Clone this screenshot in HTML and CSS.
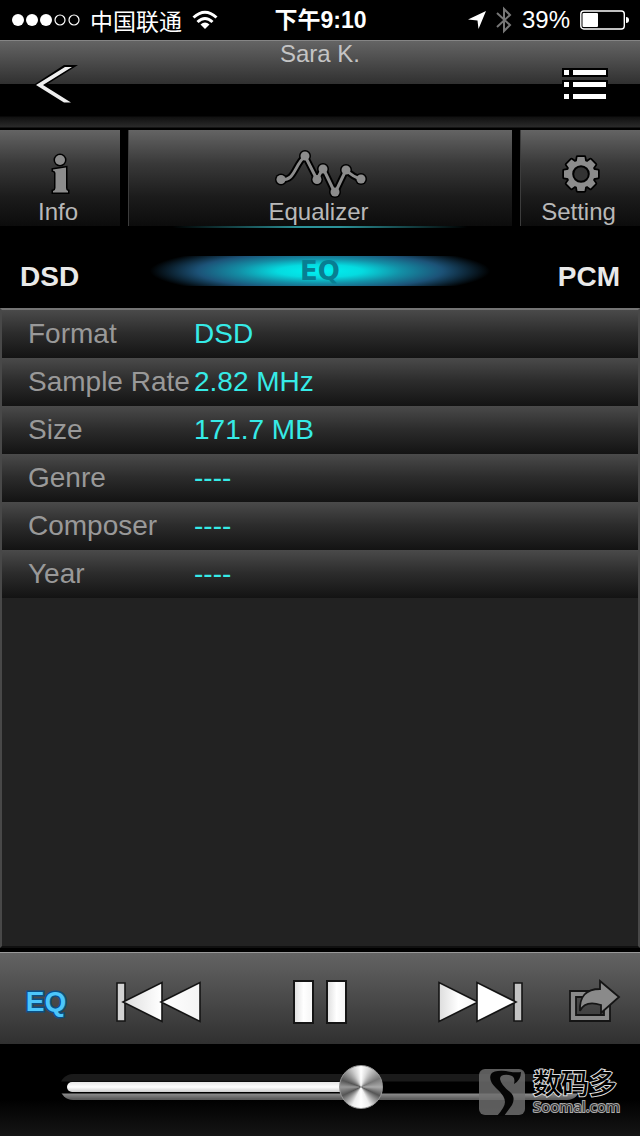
FILE: index.html
```html
<!DOCTYPE html>
<html lang="zh-CN">
<head>
<meta charset="utf-8">
<meta name="viewport" content="width=device-width, initial-scale=1">
<title>Sara K.</title>
<link rel="stylesheet" href="styles.css">
</head>
<body>
<div class="status">
  <div class="status-left">
    <svg width="68" height="14" viewBox="0 0 68 14" fill="#fff" aria-hidden="true">
      <circle cx="6" cy="7" r="6"/><circle cx="20" cy="7" r="6"/><circle cx="34" cy="7" r="6"/>
      <g fill="none" stroke="#fff" stroke-width="1.2"><circle cx="48" cy="7" r="5"/><circle cx="62" cy="7" r="5"/></g>
    </svg>
    <span class="carrier">中国联通</span>
    <svg width="26" height="20" viewBox="0 0 26 20" fill="none" stroke="#fff" stroke-width="3" aria-hidden="true">
      <path d="M1.5 7.5Q13-3 24.500 7.500"/><path d="M5.500 12Q13 5 20.500 12"/><path d="M8.500 14.500Q13 10.500 17.500 14.500L13 19Z" fill="#fff" stroke="none"/>
    </svg>
  </div>
  <span class="clock">下午9:10</span>
  <div class="status-right">
    <svg width="18" height="18" viewBox="0 0 18 18" aria-hidden="true"><path d="M18 0L10.500 18L9.500 9.500L0 8.500Z" fill="#fff"/></svg>
    <svg width="16" height="28" viewBox="0 0 16 28" fill="none" stroke="#777" stroke-width="2" aria-hidden="true"><path d="M1 7L14 19L8 25V3L14 9L1 21"/></svg>
    <span>39%</span>
    <svg width="49" height="20" viewBox="0 0 49 20" aria-hidden="true"><rect x=".8" y="1" width="43.500" height="18" rx="3" fill="none" stroke="#fff" stroke-width="1.400"/><rect x="2.500" y="3" width="15.500" height="14" rx="1" fill="#fff"/><path d="M46 7Q49 7 49 10T46 13Z" fill="#fff"/></svg>
  </div>
</div>

<header class="header">
  <button class="icon-btn back" aria-label="Back">
    <svg width="46" height="42" viewBox="34 63 46 42" aria-hidden="true"><path d="M35 83L64 64H78L46 84L72 102H64Z" fill="#000"/><path d="M36 84L65 66H72L43 84L71 101.500H64Z" fill="#eee"/></svg>
  </button>
  <h1 class="title">Sara K.</h1>
  <button class="icon-btn menu" aria-label="Playlist">
    <svg width="46" height="34" viewBox="562 67 46 34" aria-hidden="true"><path d="M562 67H608V76H562ZM562 79H608V88H562ZM562 91H608V100H562Z" fill="#000"/><path d="M564 69H569V74H564ZM573 69H606V74H573ZM564 81H569V86H564ZM573 81H606V86H573ZM564 93H569V98H564ZM573 93H606V98H573Z" fill="#fff"/></svg>
  </button>
</header>

<nav class="tabs">
  <button class="tab">
    <svg width="24" height="44" viewBox="48 151 24 44" fill="#8c8c8c" stroke="#000" stroke-width="3" paint-order="stroke" aria-hidden="true"><circle cx="60" cy="159" r="5"/><path d="M53 168.500L66 166.500V187Q66 189.500 68 190V191.500H53V190Q55.500 189.500 55.500 187V172Q55.500 170 53 169.500Z"/></svg>
    <span>Info</span>
  </button>
  <button class="tab">
    <svg width="94" height="50" viewBox="273 147 94 50" fill="none" stroke-linejoin="round" aria-hidden="true">
      <path stroke="#000" stroke-width="7" d="M280 177.500C294 179 293 164 304 154L316 177.500L322 166L334 191L345 168Q352 175 360 177"/>
      <g fill="#000"><circle cx="280" cy="177.500" r="6"/><circle cx="304" cy="154" r="6"/><circle cx="316" cy="177.500" r="6"/><circle cx="322" cy="167" r="6"/><circle cx="334" cy="190" r="6"/><circle cx="345" cy="168" r="6"/><circle cx="360" cy="177" r="6"/></g>
      <path stroke="#8c8c8c" stroke-width="3" d="M280 177.500C294 179 293 164 304 154L316 177.500L322 166L334 191L345 168Q352 175 360 177"/>
      <g fill="#8c8c8c"><circle cx="280" cy="177.500" r="4.500"/><circle cx="304" cy="154" r="4.500"/><circle cx="316" cy="177.500" r="4.500"/><circle cx="322" cy="167" r="4.500"/><circle cx="334" cy="190" r="4.500"/><circle cx="345" cy="168" r="4.500"/><circle cx="360" cy="177" r="4.500"/></g>
    </svg>
    <span>Equalizer</span>
  </button>
  <button class="tab">
    <svg width="44" height="44" viewBox="-22 -22 44 44" aria-hidden="true">
      <defs><g id="gear"><circle r="13.500"/><path id="teeth" d="M-3.500-17H3.500L4.500-11H-4.500ZM-3.500 17H3.500L4.500 11H-4.500ZM17-3.500V3.500L11 4.500V-4.500ZM-17-3.500V3.500L-11 4.500V-4.500Z"/><use href="#teeth" transform="rotate(45)"/></g></defs>
      <use href="#gear" fill="#000" stroke="#000" stroke-width="3.500" stroke-linejoin="round"/><use href="#gear" fill="#8c8c8c"/><circle r="7.800" fill="#333" stroke="#000" stroke-width="2"/>
    </svg>
    <span>Setting</span>
  </button>
</nav>
<div class="tab-glow"></div>

<section class="modes">
  <span>DSD</span>
  <button class="eq-lamp">EQ</button>
  <span class="mode-right">PCM</span>
</section>

<main class="panel">
  <table class="facts">
    <tr><th scope="row">Format</th><td>DSD</td></tr>
    <tr><th scope="row">Sample Rate</th><td>2.82 MHz</td></tr>
    <tr><th scope="row">Size</th><td>171.7 MB</td></tr>
    <tr><th scope="row">Genre</th><td>----</td></tr>
    <tr><th scope="row">Composer</th><td>----</td></tr>
    <tr><th scope="row">Year</th><td>----</td></tr>
  </table>
</main>

<footer class="player">
  <div class="controls">
    <button class="icon-btn eq-btn">EQ</button>
    <button class="icon-btn" aria-label="Previous">
      <svg width="88" height="44" viewBox="0 0 88 44" stroke="#151515" stroke-width="1.600" aria-hidden="true"><defs><linearGradient id="w"><stop stop-color="#ddd"/><stop offset=".5" stop-color="#fff"/><stop offset="1" stop-color="#f4f4f4"/></linearGradient></defs><path d="M3 3H11V41H3Z" fill="#d2d2d2"/><path d="M9 22L48 2.500V41.500ZM47 22L86 2.500V41.500Z" fill="url(#w)"/></svg>
    </button>
    <button class="icon-btn" aria-label="Pause">
      <svg width="56" height="44" viewBox="0 0 56 44" fill="url(#w)" stroke="#151515" stroke-width="2" aria-hidden="true"><path d="M2 1H21V43H2Z"/><path d="M35 1H54V43H35Z"/></svg>
    </button>
    <button class="icon-btn" aria-label="Next">
      <svg width="88" height="44" viewBox="0 0 88 44" stroke="#151515" stroke-width="1.600" aria-hidden="true"><path d="M76 3H84V41H76Z" fill="#c4c4c4"/><path d="M40 22L1 2.500V41.500Z" fill="url(#w)"/><path d="M78 22L39 2.500V41.500Z" fill="#fff"/></svg>
    </button>
    <button class="icon-btn" aria-label="Share">
      <svg width="54" height="48" viewBox="568 976 54 48" fill="#8a8a8a" stroke="#151515" stroke-width="1.800" aria-hidden="true"><path fill-rule="evenodd" d="M571 989H611V1019H571ZM577 995V1013H605V995Z"/><path d="M601 979L620 995L602 1011V1003Q586 998 581 1009Q580 987 601 987Z"/></svg>
    </button>
  </div>
  <div class="seek">
    <div class="seek-track"><div class="seek-fill"></div></div>
    <input class="seek-input" type="range" min="0" max="1000" value="586" aria-label="Volume">
  </div>
  <div class="mark">
    <svg width="48" height="48" viewBox="0 0 48 48" aria-hidden="true"><rect x="1" y="1" width="46" height="46" rx="6" fill="#707070" fill-opacity=".82"/><path d="M43 4Q43 12 36 16Q38 8 31 7Q22 6 22 11Q23 17 32 24Q38 29 34 37L26 48H19Q27 39 27 34Q27 28 18 20Q10 12 13 6Q16 2 28 3Q38 5 43 4Z" fill="#050505"/></svg>
    <div><div class="mark-name">数码多</div><div class="mark-site">Soomal.com</div></div>
  </div>
</footer>
</body>
</html>
```
FILE: styles.css
```css
* { box-sizing: border-box; }

body {
  margin: 0;
  min-height: 100vh;
  display: flex;
  flex-direction: column;
  background: #000;
  color: #fff;
  font-family: "Liberation Sans", "Noto Sans CJK SC", sans-serif;
  font-size: 24px;
}

button {
  border: 0;
  padding: 0;
  background: none;
  color: inherit;
  font: inherit;
  cursor: pointer;
}

svg { display: block; flex: none; }

.status {
  display: grid;
  grid-template-columns: 1fr auto 1fr;
  align-items: center;
  height: 40px;
  padding: 0 11px 0 12px;
  white-space: nowrap;
}

.status-left,
.status-right {
  display: flex;
  align-items: center;
  gap: 10px;
}

.carrier {
  font-family: "Noto Sans CJK SC", sans-serif;
  font-size: 23px;
  line-height: 32px;
}

.status-right { justify-content: flex-end; }
.clock { font-size: 23px; font-weight: 700; line-height: 32px; }

.header {
  display: grid;
  grid-template-columns: 120px 1fr 120px;
  align-items: center;
  height: 88px;
  border-top: 1px solid #858585;
  background: linear-gradient(#646464 0, #303030 43px, #000 43px, #000 75px, #101010 76px, #2a2a2a 86px, #000 87px);
}

.icon-btn {
  display: flex;
  align-items: center;
  justify-content: center;
}

.back { justify-content: flex-start; padding-left: 34px; }
.menu { justify-content: flex-end; padding-right: 32px; }

.title {
  align-self: start;
  margin: 0;
  color: #c4c4c4;
  font-size: 24px;
  font-weight: 400;
  line-height: 26px;
  text-align: center;
}

.tabs {
  display: grid;
  grid-template-columns: 120px 1fr 120px;
  gap: 8px;
  padding-top: 2px;
}

.tab {
  display: grid;
  grid-template-rows: 48px 28px;
  align-items: center;
  justify-items: center;
  align-content: end;
  height: 96px;
  border-left: 1px solid #3c3c3c;
  background: linear-gradient(#646464, #393939 35%, #1b1b1b 70%, #0c0c0c);
  color: #b8b8b8;
  line-height: 28px;
}

.tab span { padding-right: 4px; }
.tab:first-child { border-left: 0; }

.tab-glow {
  height: 2px;
  background: linear-gradient(90deg, transparent 27%, #2b9299 47%, #2b9299 53%, transparent 73%);
}

.modes {
  display: grid;
  grid-template-columns: 1fr 340px 1fr;
  align-items: start;
  height: 80px;
  padding: 28px 20px 0;
  color: #e9e9e9;
  font-size: 28px;
  font-weight: 700;
  line-height: 42px;
}

.mode-right { text-align: right; }

.eq-lamp {
  height: 30px;
  background: radial-gradient(ellipse 50% 85% at center, #00f2f2 0, #05dbe0 25%, #138fa6 48%, #1c5277 72%, transparent 100%);
  color: #087e92;
  font-family: "DejaVu Sans", sans-serif;
  font-size: 26px;
  font-weight: 700;
  line-height: 30px;
}

.panel {
  flex: 1;
  border: 2px solid #484848;
  border-top-color: #747474;
  border-bottom-color: #101010;
  background: #222;
}

.facts {
  width: 100%;
  border-collapse: collapse;
  font-size: 28px;
}

.facts tr {
  height: 48px;
  background: linear-gradient(#4a4a4a, #2c2c2c 48%, #131313);
}

.facts th,
.facts td {
  padding: 0;
  font-weight: 400;
  text-align: left;
  white-space: nowrap;
}

.facts th {
  width: 192px;
  padding-left: 26px;
  color: #999;
}

.facts td { color: #36ebe7; }

.player { position: relative; padding-top: 4px; }

.controls {
  display: grid;
  grid-template-columns: 23fr 33fr 48fr 33fr 23fr;
  align-items: center;
  height: 92px;
  padding-bottom: 2px;
  border-top: 1px solid #999;
  background: linear-gradient(#636363, #303030);
}

.controls .icon-btn { padding-top: 8px; }

.controls .eq-btn {
  color: #4cc6fb;
  font-size: 28px;
  font-weight: 700;
  -webkit-text-stroke: 3px #0b4f86;
  paint-order: stroke fill;
}

.seek {
  display: grid;
  align-items: center;
  height: 92px;
  padding: 0 60px 6px;
  background: linear-gradient(#000 60%, #151515);
}

.seek-track,
.seek-input { grid-area: 1 / 1; }

.seek-track {
  height: 26px;
  padding: 8px 7px;
  border-radius: 13px;
  background: linear-gradient(#1a1a1a 0, #1a1a1a 7px, #000 8px, #000 19px, #8a8a8a 20px, #5c5c5c 25px);
}

.seek-fill {
  width: 58%;
  height: 10px;
  border-radius: 5px;
  background: linear-gradient(#e6e6e6, #fff 50%, #ccc);
}

.seek-input {
  width: 100%;
  height: 46px;
  margin: 0;
  background: transparent;
  appearance: none;
  -webkit-appearance: none;
}

.seek-input::-webkit-slider-thumb {
  -webkit-appearance: none;
  width: 44px;
  height: 44px;
  border: 1px solid #999;
  border-radius: 50%;
  background: conic-gradient(#fff 0, #ddd 20deg, #777 65deg, #aaa 90deg, #555 115deg, #eee 155deg, #fff 180deg, #eee 205deg, #555 245deg, #999 270deg, #555 290deg, #ccc 335deg, #fff 360deg);
}

.mark {
  position: absolute;
  right: 20px;
  bottom: 20px;
  display: flex;
  align-items: center;
  gap: 7px;
  pointer-events: none;
}

.mark-name {
  color: #000;
  font-family: "Noto Sans CJK SC", sans-serif;
  font-size: 28px;
  font-weight: 500;
  line-height: 28px;
  -webkit-text-stroke: 2px #ddd;
  paint-order: stroke fill;
}

.mark-site {
  color: #333;
  font-family: "Noto Sans", sans-serif;
  font-size: 15px;
  line-height: 20px;
  -webkit-text-stroke: 2px #aaa;
  paint-order: stroke fill;
}
```
